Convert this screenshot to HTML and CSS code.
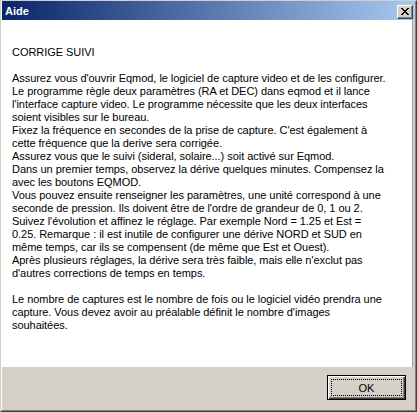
FILE: index.html
```html
<!DOCTYPE html>
<html lang="fr">
<head>
<meta charset="utf-8">
<title>Aide</title>
<link rel="stylesheet" href="styles.css">
</head>
<body>
<div class="window">
  <div class="frame">
    <div class="titlebar">
      <span class="title">Aide</span>
      <button class="close" type="button" aria-label="Fermer">
        <svg width="8" height="7" viewBox="0 0 8 7" shape-rendering="crispEdges"><path fill="#000" d="M0 0h2v1H0zM6 0h2v1H6zM1 1h2v1H1zM5 1h2v1H5zM2 2h4v1H2zM3 3h2v1H3zM2 4h4v1H2zM1 5h2v1H1zM5 5h2v1H5zM0 6h2v1H0zM6 6h2v1H6z"/></svg>
      </button>
    </div>
    <div class="textbox">
<div class="text">CORRIGE SUIVI

Assurez vous d'ouvrir Eqmod, le logiciel de capture video et de les configurer.
Le programme règle deux paramètres (RA et DEC) dans eqmod et il lance
l'interface capture video. Le programme nécessite que les deux interfaces
soient visibles sur le bureau.
Fixez la fréquence en secondes de la prise de capture. C'est également à
cette fréquence que la derive sera corrigée.
Assurez vous que le suivi (sideral, solaire...) soit activé sur Eqmod.
Dans un premier temps, observez la dérive quelques minutes. Compensez la
avec les boutons EQMOD.
Vous pouvez ensuite renseigner les paramètres, une unité correspond à une
seconde de pression. Ils doivent être de l'ordre de grandeur de 0, 1 ou 2.
Suivez l'évolution et affinez le réglage. Par exemple Nord = 1.25 et Est =
0.25. Remarque : il est inutile de configurer une dérive NORD et SUD en
même temps, car ils se compensent (de même que Est et Ouest).
Après plusieurs réglages, la dérive sera très faible, mais elle n'exclut pas
d'autres corrections de temps en temps.

Le nombre de captures est le nombre de fois ou le logiciel vidéo prendra une
capture. Vous devez avoir au préalable définit le nombre d'images
souhaitées.</div>
    </div>
    <div class="footer">
      <button class="ok" type="button"><span class="focus">OK</span></button>
    </div>
  </div>
</div>
</body>
</html>
```

FILE: styles.css
```css
html, body {
  margin: 0;
  padding: 0;
  background: #d4d0c8;
}

.window {
  box-sizing: border-box;
  width: 417px;
  height: 412px;
  border: 1px solid;
  border-color: #d4d0c8 #404040 #404040 #d4d0c8;
  font-family: "Liberation Sans", Arial, sans-serif;
  font-size: 11px;
  color: #000;
}

.frame {
  box-sizing: border-box;
  height: 100%;
  display: flex;
  flex-direction: column;
  background: #d4d0c8;
  border-style: solid;
  border-width: 0 1px 1px 1px;
  border-color: #fff #808080 #808080 #fff;
}

.titlebar {
  height: 19px;
  flex: none;
  display: flex;
  align-items: center;
  justify-content: space-between;
  background: linear-gradient(to right, #0a246a, #a6caf0);
  padding: 0 2px 0 3px;
}

.title {
  color: #fff;
  font-weight: bold;
  font-size: 11px;
}

.close {
  box-sizing: border-box;
  width: 16px;
  height: 14px;
  margin-top: 2px;
  padding: 0;
  display: flex;
  align-items: center;
  justify-content: center;
  background: #d4d0c8;
  border: 1px solid;
  border-color: #fff #404040 #404040 #fff;
  box-shadow: inset -1px -1px #808080;
}

.close svg {
  display: block;
  margin: 0 1px 0 0;
}

.textbox {
  box-sizing: border-box;
  height: 347px;
  flex: none;
  margin-right: 2px;
  background: #fff;
  border-right: 1px solid #a0a0a0;
  padding: 26px 0 0 10px;
}

.text {
  white-space: pre;
  line-height: 13px;
  font-size: 11px;
  letter-spacing: -0.05px;
}

.footer {
  flex: 1;
  display: flex;
  justify-content: flex-end;
  align-items: flex-start;
  padding: 8px 9px 0 0;
}

.ok {
  box-sizing: border-box;
  width: 79px;
  height: 25px;
  padding: 3px;
  background: #d4d0c8;
  border: 1px solid #000;
  box-shadow: inset 1px 1px #fff, inset -1px -1px #404040, inset -2px -2px #808080;
  font-family: "Liberation Sans", Arial, sans-serif;
  font-size: 11px;
  color: #000;
}

.focus {
  box-sizing: border-box;
  display: flex;
  align-items: center;
  justify-content: center;
  height: 100%;
  border: 1px dotted #000;
}
```
